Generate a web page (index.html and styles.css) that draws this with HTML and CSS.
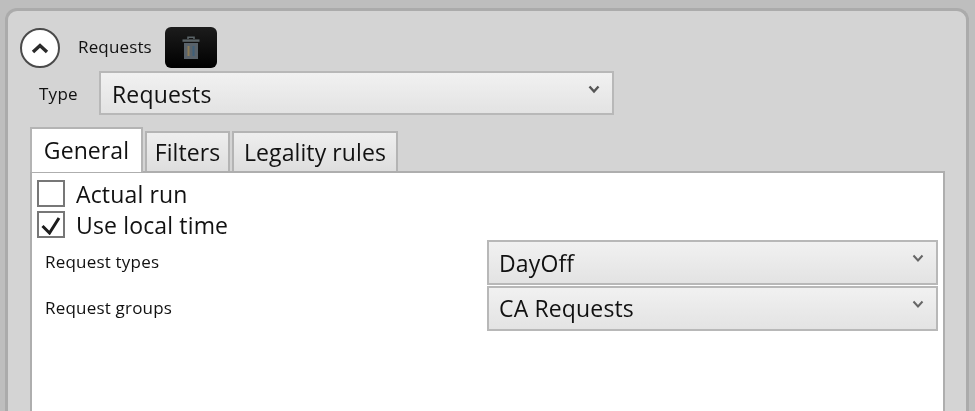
FILE: index.html
```html
<!DOCTYPE html>
<html lang="en">
<head>
  <meta charset="UTF-8">
  <title>Requests</title>
  <link rel="stylesheet" href="styles.css">
</head>
<body>
  <div class="panel">
    <div class="head">
      <button class="collapse" type="button">
        <svg width="20" height="12" viewBox="0 0 20 12"><path d="M3 10 L10 3.5 L17 10" fill="none" stroke="#2b2b2b" stroke-width="3.4"/></svg>
      </button>
      <span class="head-title">Requests</span>
      <button class="delete" type="button">
        <svg width="18" height="24" viewBox="0 0 18 24">
          <path d="M6 3V1.2H12V3" fill="none" stroke="#5b6468" stroke-width="1.6"/>
          <rect x="0.5" y="3.4" width="17" height="2.4" fill="#5b6468"/>
          <path d="M2 7H16V23H2Z" fill="#59626a"/>
          <rect x="5.5" y="10" width="2" height="10" fill="#8c7a55"/>
          <rect x="10.5" y="10" width="2" height="10" fill="#3f5f78"/>
        </svg>
      </button>
    </div>

    <div class="type-row">
      <label class="type-label">Type</label>
      <div class="combo combo-type">
        <span>Requests</span>
        <svg class="chev" width="12" height="9" viewBox="0 0 12 9"><path d="M1.5 1.5 L6 6.5 L10.5 1.5" fill="none" stroke="#555" stroke-width="2.4"/></svg>
      </div>
    </div>

    <div class="tabs">
      <div class="tab tab-general">General</div>
      <div class="tab tab-filters">Filters</div>
      <div class="tab tab-rules">Legality rules</div>
    </div>

    <div class="tab-body">
      <div class="check-row">
        <span class="box"></span>
        <span>Actual run</span>
      </div>
      <div class="check-row">
        <span class="box">
          <svg width="20" height="20" viewBox="0 0 20 20"><path d="M1.5 11 L8.5 18 L18 3" fill="none" stroke="#1c1c1c" stroke-width="3"/></svg>
        </span>
        <span>Use local time</span>
      </div>
      <div class="fields">
        <div class="field">
          <label>Request types</label>
          <div class="combo combo-field">
            <span>DayOff</span>
            <svg class="chev" width="12" height="9" viewBox="0 0 12 9"><path d="M1.5 1.5 L6 6.5 L10.5 1.5" fill="none" stroke="#666" stroke-width="2"/></svg>
          </div>
        </div>
        <div class="field">
          <label>Request groups</label>
          <div class="combo combo-field">
            <span>CA Requests</span>
            <svg class="chev" width="12" height="9" viewBox="0 0 12 9"><path d="M1.5 1.5 L6 6.5 L10.5 1.5" fill="none" stroke="#666" stroke-width="2"/></svg>
          </div>
        </div>
      </div>
    </div>
  </div>
</body>
</html>
```

FILE: styles.css
```css
* { margin: 0; padding: 0; box-sizing: border-box; }
html, body { height: 411px; overflow: hidden; }
body { background: #bebebe; color: #111; font-family: 'Open Sans', sans-serif; padding: 8px 6px 0 5px; }

.panel { height: 420px; background: #d4d4d4; border: 3px solid #ababab; border-bottom: none; border-radius: 12px 12px 0 0; padding: 16px 21px 0 12px; filter: blur(0.5px); }

.head { display: flex; align-items: center; height: 41px; }
.collapse { width: 40px; height: 40px; border: 2px solid #4a4a4a; border-radius: 50%; background: #fff; display: flex; align-items: center; justify-content: center; }
.head-title { font-size: 17px; letter-spacing: 0.15px; margin-left: 18px; margin-top: -2px; width: 87px; }
.delete { width: 52px; height: 41px; border: none; border-radius: 6px; background: linear-gradient(#1c1c1c, #000); display: flex; align-items: center; justify-content: center; }

.type-row { display: flex; align-items: center; margin-top: 3px; height: 44px; }
.type-label { font-size: 17px; letter-spacing: 0.25px; margin-left: 19px; width: 60px; }

.combo { display: flex; align-items: center; justify-content: space-between; background: linear-gradient(#f1f1f1, #e3e3e3); border: 2px solid #b8b8b8; font-size: 23px; letter-spacing: 0.15px; }
.combo-type { width: 515px; height: 44px; padding: 0 12px 0 11px; }
.combo-type span { margin-top: 2px; }
.combo-field { width: 451px; height: 45px; padding: 0 12px 0 10px; }
.chev { margin-top: -8px; }

.tabs { display: flex; align-items: flex-end; gap: 2px; height: 45px; margin: 11px 0 0 10px; }
.tab { height: 40px; display: flex; align-items: center; justify-content: center; background: linear-gradient(#eeeeee, #dedede); border: 2px solid #b4b4b4; border-bottom: none; font-size: 23px; letter-spacing: 0.1px; }
.tab-general { height: 45px; width: 113px; background: #fff; margin-bottom: -1px; position: relative; z-index: 1; padding-bottom: 1px; }
.tab-filters { width: 85px; }
.tab-rules { width: 166px; }

.tab-body { height: 260px; margin-left: 10px; background: #fff; border: 2px solid #aeaeae; padding: 5px 5px 0 5px; }

.check-row { display: flex; align-items: center; gap: 11px; height: 31px; font-size: 23px; letter-spacing: 0.15px; }
.box { width: 28px; height: 27px; border: 2px solid #777; background: #fff; display: flex; align-items: center; justify-content: center; }

.field { display: flex; align-items: center; justify-content: space-between; height: 45.5px; padding-left: 8px; }
.field label { font-size: 17px; letter-spacing: 0.2px; margin-top: -2px; }
```
